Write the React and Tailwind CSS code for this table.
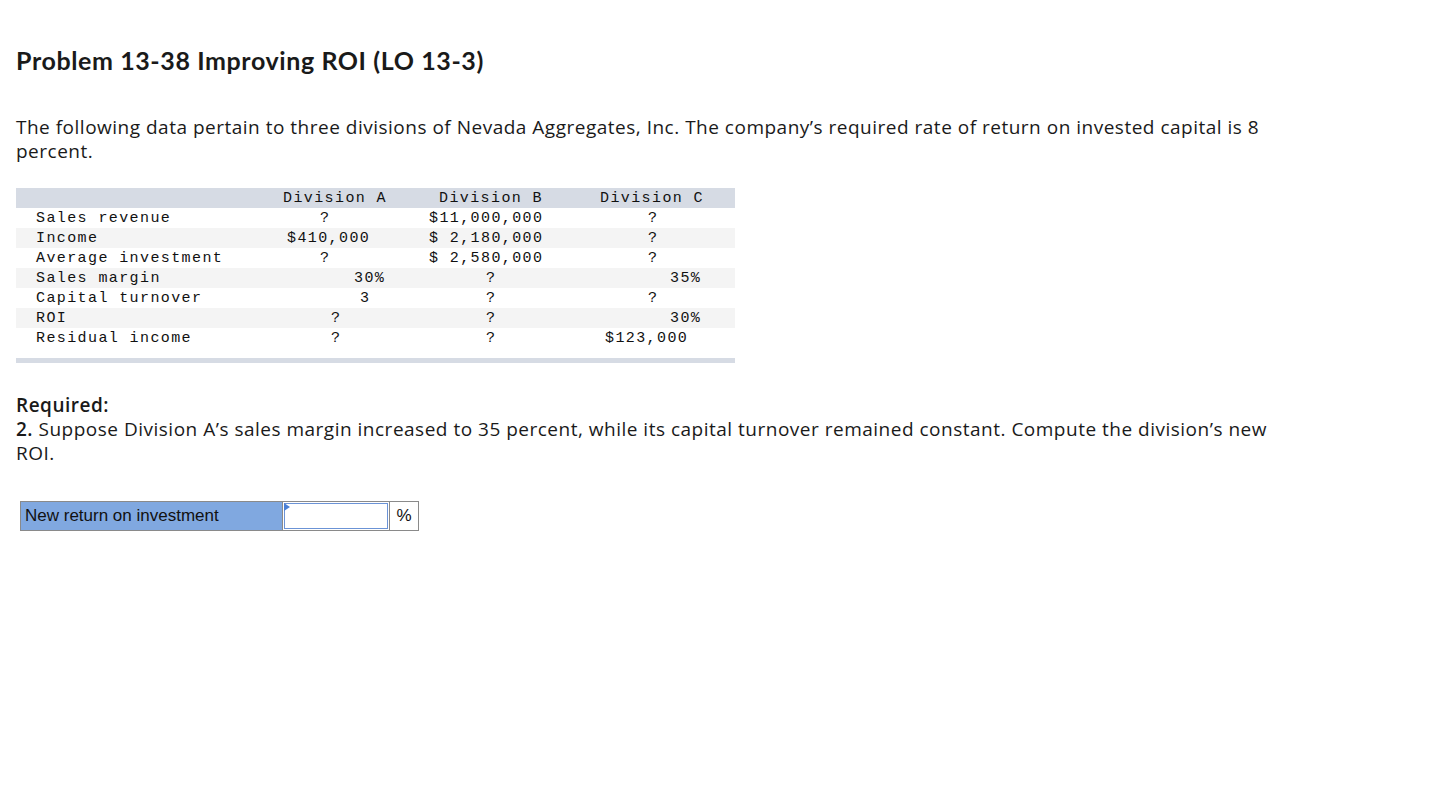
import React from "react";

const rows = [
  { label: "Sales revenue", bg: "bg-white", a: "?", ap: "pl-[55px]", b: "$11,000,000", bp: "pl-[14px]", c: "?", cp: "pl-[73px]" },
  { label: "Income", bg: "bg-[#f4f4f4]", a: "$410,000", ap: "pl-[22px]", b: "$ 2,180,000", bp: "pl-[14px]", c: "?", cp: "pl-[73px]" },
  { label: "Average investment", bg: "bg-white", a: "?", ap: "pl-[55px]", b: "$ 2,580,000", bp: "pl-[14px]", c: "?", cp: "pl-[73px]" },
  { label: "Sales margin", bg: "bg-[#f4f4f4]", a: "30%", ap: "pl-[89px]", b: "?", bp: "pl-[71px]", c: "35%", cp: "pl-[95px]" },
  { label: "Capital turnover", bg: "bg-white", a: "3", ap: "pl-[95px]", b: "?", bp: "pl-[71px]", c: "?", cp: "pl-[73px]" },
  { label: "ROI", bg: "bg-[#f4f4f4]", a: "?", ap: "pl-[66px]", b: "?", bp: "pl-[71px]", c: "30%", cp: "pl-[95px]" },
  { label: "Residual income", bg: "bg-white", a: "?", ap: "pl-[66px]", b: "?", bp: "pl-[71px]", c: "$123,000", cp: "pl-[30px]" },
];

const mono = "font-['Liberation_Mono','Courier_New',monospace] text-[15px] tracking-[1.4px] leading-[18px] pt-[2px] text-[#111] whitespace-pre";

export default function App() {
  return (
    <div className="w-[1438px] min-h-[792px] bg-white text-[#1a1a1a] font-['Open_Sans','Lato',sans-serif]">
      <div className="pl-4 pt-[44px]">
        <h1 className="font-['Lato','Open_Sans',sans-serif] text-[25px] font-bold leading-[32px] tracking-[0.6px] text-[#1a1a1a]">Problem 13-38 Improving ROI (LO 13-3)</h1>

        <div className="mt-[39px] text-[19px] leading-[24px] tracking-[0.5px]">
          <div className="whitespace-nowrap">The following data pertain to three divisions of Nevada Aggregates, Inc. The company’s required rate of return on invested capital is 8</div>
          <div>percent.</div>
        </div>

        <div className="mt-[25px] w-[719px]">
          <div className={`flex h-[20px] bg-[#d6dbe4] ${mono}`}>
            <div className="w-[249px]"></div>
            <div className="w-[150px] pl-[18px]">Division A</div>
            <div className="w-[160px] pl-[24px]">Division B</div>
            <div className="w-[160px] pl-[25px]">Division C</div>
          </div>
          {rows.map((r) => (
            <div key={r.label} className={`flex h-[20px] ${r.bg} ${mono}`}>
              <div className="w-[249px] pl-[20px]">{r.label}</div>
              <div className={`w-[150px] ${r.ap}`}>{r.a}</div>
              <div className={`w-[160px] ${r.bp}`}>{r.b}</div>
              <div className={`w-[160px] ${r.cp}`}>{r.c}</div>
            </div>
          ))}
          <div className="h-[10px]"></div>
          <div className="h-[5px] bg-[#d6dbe4]"></div>
        </div>

        <div className="mt-[30px] text-[19px] leading-[24px] tracking-[0.5px]">
          <div className="font-semibold">Required:</div>
          <div className="whitespace-nowrap"><span className="font-semibold">2.</span> Suppose Division A’s sales margin increased to 35 percent, while its capital turnover remained constant. Compute the division’s new</div>
          <div>ROI.</div>
        </div>

        <div className="mt-[36px] ml-[4px] flex h-[30px] font-['Liberation_Sans',Arial,sans-serif] text-[17px]">
          <div className="w-[263px] bg-[#80a8e0] border border-[#8a8a8a] flex items-center pl-[4px] text-[#111]">New return on investment</div>
          <div className="relative w-[106px] border-y border-[#8a8a8a] bg-white">
            <div className="absolute inset-[1px] border border-[#6b93d6] bg-white"></div>
            <div className="absolute left-[1px] top-[1px] w-0 h-0 border-t-[4px] border-b-[4px] border-l-[6px] border-t-transparent border-b-transparent border-l-[#4a7fd4]"></div>
          </div>
          <div className="w-[30px] border border-[#8a8a8a] bg-white flex items-center justify-center text-[#111]">%</div>
        </div>
      </div>
    </div>
  );
}
